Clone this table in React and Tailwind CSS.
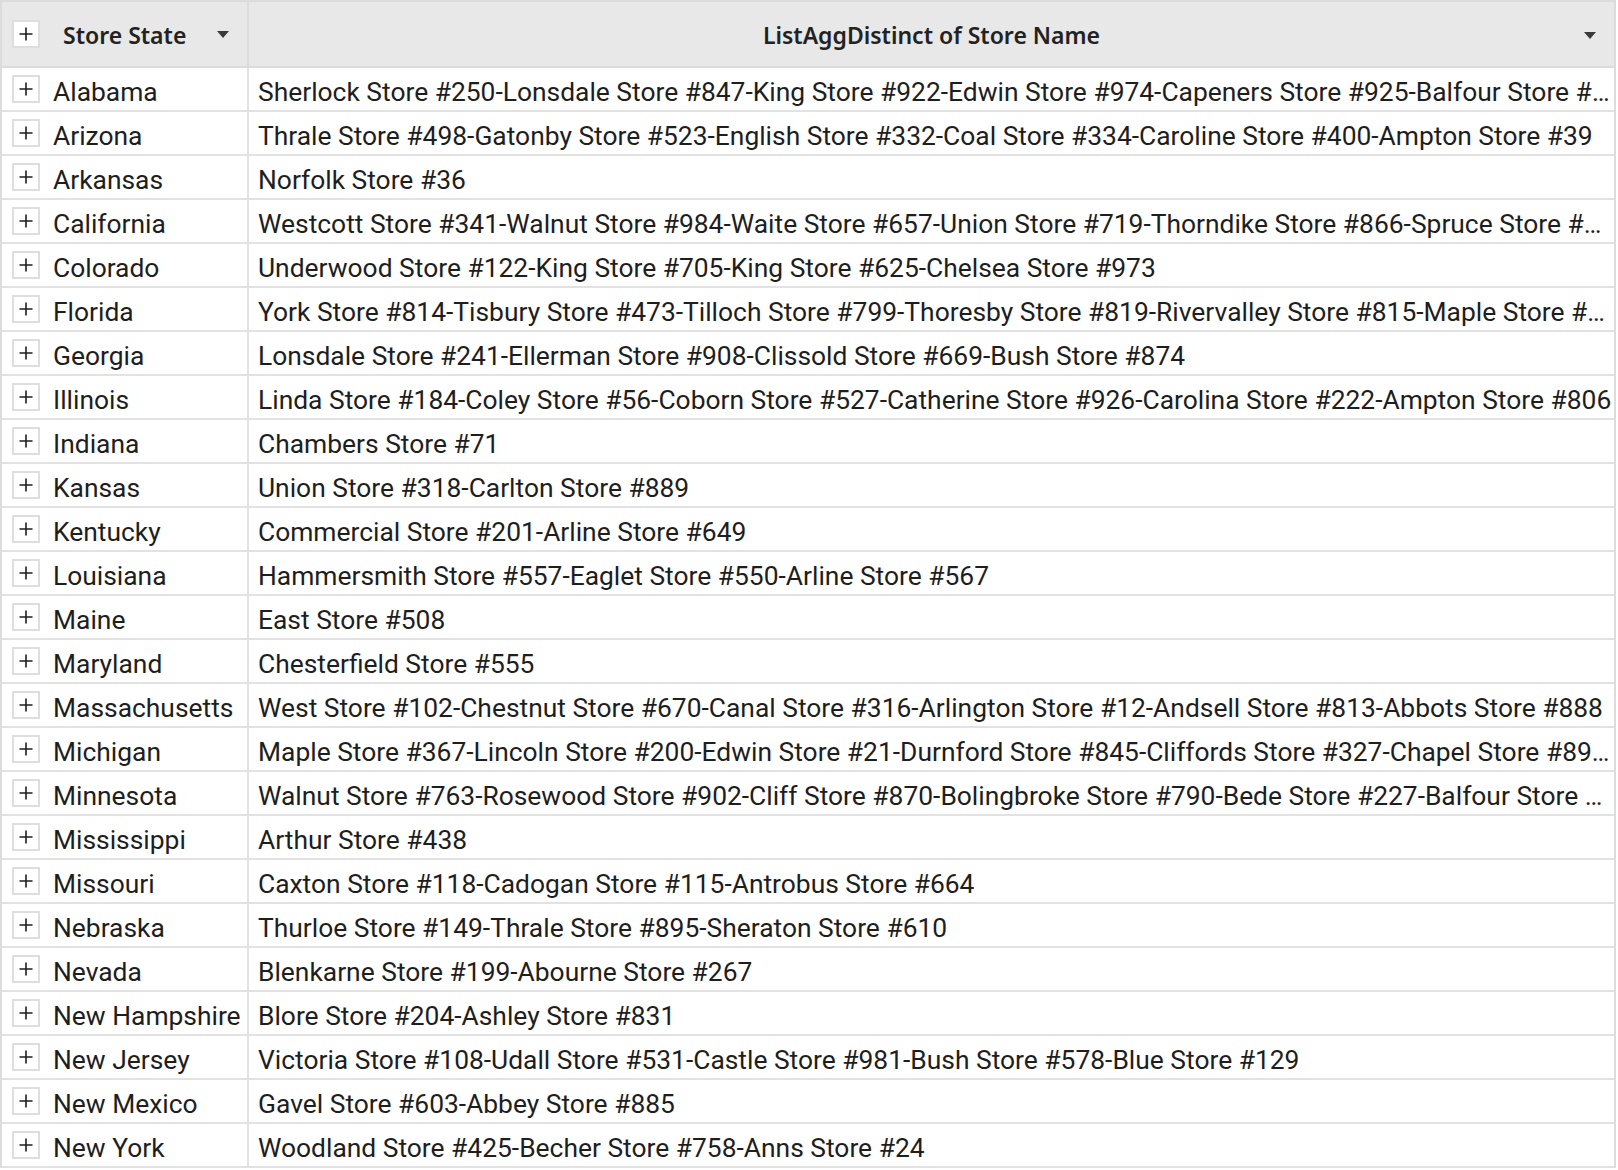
import React from "react";

const rows = [
  ["Alabama", "Sherlock Store #250-Lonsdale Store #847-King Store #922-Edwin Store #974-Capeners Store #925-Balfour Store #176-Abbey Store #301"],
  ["Arizona", "Thrale Store #498-Gatonby Store #523-English Store #332-Coal Store #334-Caroline Store #400-Ampton Store #39"],
  ["Arkansas", "Norfolk Store #36"],
  ["California", "Westcott Store #341-Walnut Store #984-Waite Store #657-Union Store #719-Thorndike Store #866-Spruce Store #442-Royal Store #95"],
  ["Colorado", "Underwood Store #122-King Store #705-King Store #625-Chelsea Store #973"],
  ["Florida", "York Store #814-Tisbury Store #473-Tilloch Store #799-Thoresby Store #819-Rivervalley Store #815-Maple Store #310-Lime Store #77"],
  ["Georgia", "Lonsdale Store #241-Ellerman Store #908-Clissold Store #669-Bush Store #874"],
  ["Illinois", "Linda Store #184-Coley Store #56-Coborn Store #527-Catherine Store #926-Carolina Store #222-Ampton Store #806"],
  ["Indiana", "Chambers Store #71"],
  ["Kansas", "Union Store #318-Carlton Store #889"],
  ["Kentucky", "Commercial Store #201-Arline Store #649"],
  ["Louisiana", "Hammersmith Store #557-Eaglet Store #550-Arline Store #567"],
  ["Maine", "East Store #508"],
  ["Maryland", "Chesterfield Store #555"],
  ["Massachusetts", "West Store #102-Chestnut Store #670-Canal Store #316-Arlington Store #12-Andsell Store #813-Abbots Store #888"],
  ["Michigan", "Maple Store #367-Lincoln Store #200-Edwin Store #21-Durnford Store #845-Cliffords Store #327-Chapel Store #894-Abbey Store #12"],
  ["Minnesota", "Walnut Store #763-Rosewood Store #902-Cliff Store #870-Bolingbroke Store #790-Bede Store #227-Balfour Store #506"],
  ["Mississippi", "Arthur Store #438"],
  ["Missouri", "Caxton Store #118-Cadogan Store #115-Antrobus Store #664"],
  ["Nebraska", "Thurloe Store #149-Thrale Store #895-Sheraton Store #610"],
  ["Nevada", "Blenkarne Store #199-Abourne Store #267"],
  ["New Hampshire", "Blore Store #204-Ashley Store #831"],
  ["New Jersey", "Victoria Store #108-Udall Store #531-Castle Store #981-Bush Store #578-Blue Store #129"],
  ["New Mexico", "Gavel Store #603-Abbey Store #885"],
  ["New York", "Woodland Store #425-Becher Store #758-Anns Store #24"],
];

function PlusBox() {
  return (
    <div className="flex h-[28px] w-[28px] shrink-0 items-center justify-center border-2 border-[#dedede] bg-white">
      <svg width="14" height="14" viewBox="0 0 14 14">
        <path d="M7 0.5v13M0.5 7h13" stroke="#1f1f1f" strokeWidth="1.6" />
      </svg>
    </div>
  );
}

function Caret() {
  return (
    <svg width="12" height="7" viewBox="0 0 12 7">
      <path d="M0 0h12L6 7z" fill="#3a3a3a" />
    </svg>
  );
}

export default function App() {
  return (
    <div className="h-[1170px] w-[1618px] overflow-hidden bg-white">
      <div className="w-[1616px] border-x-2 border-t-2 border-[#dcdcdc]">
        {/* header */}
        <div className="flex h-[66px] border-b-2 border-[#dcdcdc] bg-[#e8e8e8] font-['Noto_Sans',sans-serif] text-[23px] font-semibold text-[#222]">
          <div className="flex w-[247px] shrink-0 items-center border-r-2 border-[#dcdcdc] pl-[10px]">
            <PlusBox />
            <span className="ml-[23px] pt-[2px]">Store State</span>
            <span className="ml-auto mr-[18px] flex">
              <Caret />
            </span>
          </div>
          <div className="relative flex flex-1 items-center justify-center">
            <span className="pt-[2px]">ListAggDistinct of Store Name</span>
            <span className="absolute right-[18px] top-[30px] flex">
              <Caret />
            </span>
          </div>
        </div>
        {/* body */}
        {rows.map(([state, stores]) => (
          <div
            key={state}
            className="flex h-[44px] border-b-2 border-[#e2e2e2] font-['Roboto',sans-serif] text-[26.4px] text-[#1e1e1e]"
          >
            <div className="flex w-[247px] shrink-0 items-center border-r-2 border-[#e2e2e2] pl-[10px]">
              <PlusBox />
              <span className="ml-[13px] whitespace-nowrap pt-[8px]">{state}</span>
            </div>
            <div className="flex min-w-0 flex-1 items-center pl-[9px] pr-[2px]">
              <span className="overflow-hidden text-ellipsis whitespace-nowrap pt-[8px]">{stores}</span>
            </div>
          </div>
        ))}
      </div>
    </div>
  );
}
